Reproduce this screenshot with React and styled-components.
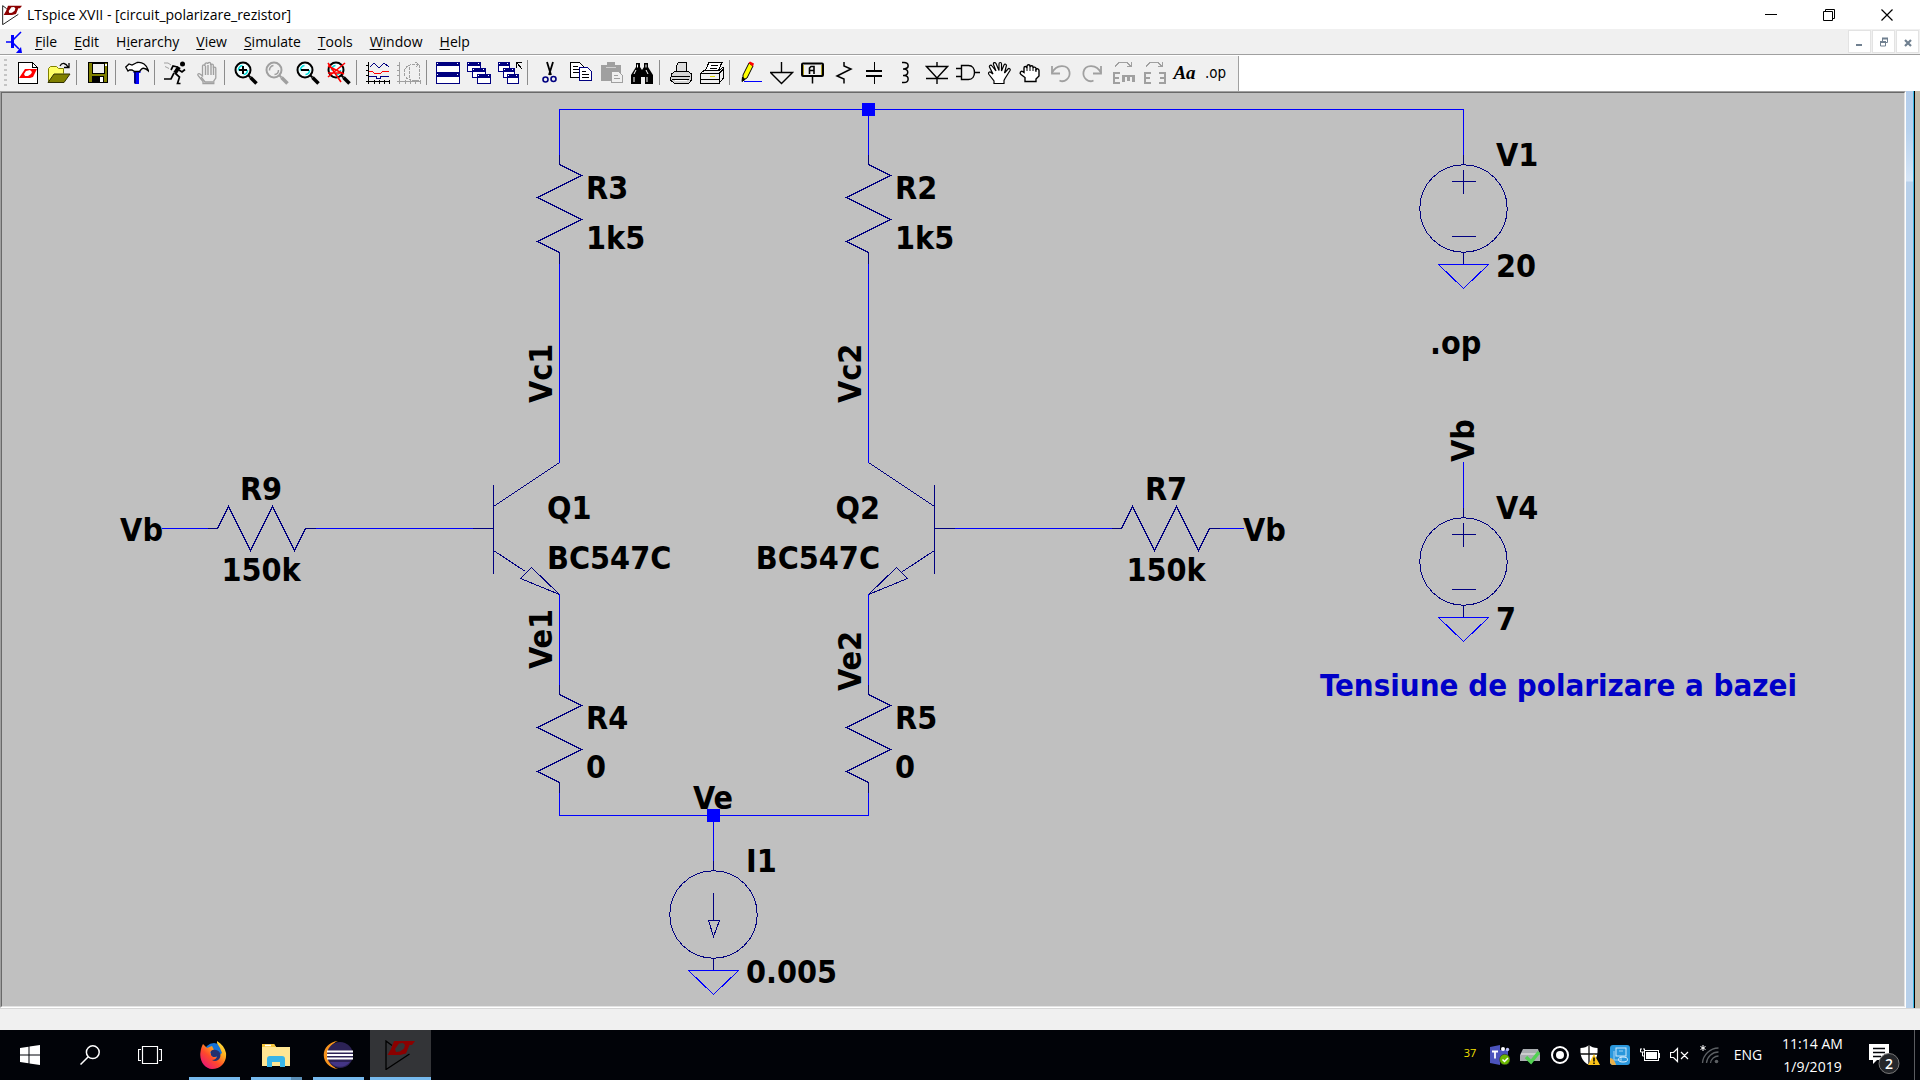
import React from "react";
import styled, { createGlobalStyle, css } from "styled-components";

const NAVY = "#000080";
const WIRE = "#0000ff";
const GRAY = "#a0a0a0";

const GlobalStyle = createGlobalStyle`
  *, *::before, *::after { box-sizing: border-box; }
  html, body { margin: 0; height: 100%; }
  #root { height: 100%; }
  body {
    overflow: hidden;
    font-family: "Open Sans", "Noto Sans", sans-serif;
    font-size: 14px;
    line-height: 20px;
    color: #000;
  }
  svg { display: block; flex: none; }
`;

const Screen = styled.div`
  display: flex;
  flex-direction: column;
  height: 100vh;
  background: #f0f0f0;
`;

const PlainButton = styled.button`
  display: flex;
  align-items: center;
  justify-content: center;
  flex: none;
  margin: 0;
  padding: 0;
  border: 0;
  background: transparent;
  color: inherit;
  font: inherit;
`;

/* ---------- title bar ---------- */

const TitleBar = styled.header`
  display: flex;
  align-items: center;
  height: 29px;
  padding: 0 4px 0 2px;
  background: #fff;
`;

const Title = styled.h1`
  flex: 1;
  margin: 0;
  padding-left: 5px;
  font-size: 14px;
  font-weight: 400;
  line-height: 28px;
`;

const WindowButton = styled(PlainButton)`
  width: 58px;
  height: 29px;
`;

/* ---------- menu bar ---------- */

const MenuBar = styled.nav`
  display: flex;
  align-items: center;
  height: 25px;
  padding-left: 5px;
`;

const Menus = styled.div`
  display: flex;
  flex: 1;
  padding-left: 4px;
`;

const MenuButton = styled(PlainButton)`
  padding: 0 9px 0 8px;
  height: 25px;
  u { text-underline-offset: 2px; }
`;

const MdiButton = styled(PlainButton)`
  width: 23px;
  height: 23px;
  margin-right: 1px;
  border: 1px solid #e3e3e3;
  background: #fff;
`;

/* ---------- toolbar ---------- */

const ToolRow = styled.div`
  display: flex;
  height: 37px;
  border-top: 1px solid ${GRAY};
  background: #fff;
  padding-top: 1px;
`;

const ToolBar = styled.div`
  display: flex;
  align-items: center;
  padding: 0 7px 2px 0;
  border-right: 1px solid ${GRAY};
  background: #f0f0f0;
`;

const Grip = styled.div`
  width: 3px;
  height: 28px;
  margin: 0 5px 0 4px;
  background: repeating-linear-gradient(#c4c4c4 0 2px, transparent 2px 5px);
`;

const ToolButton = styled(PlainButton)`
  width: 31px;
  height: 32px;
`;

const ToolSeparator = styled.div`
  width: 8px;
  height: 25px;
  padding-left: 2px;
  &::before {
    content: "";
    display: block;
    width: 1px;
    height: 100%;
    background: #8c8c8c;
  }
`;

const ToolText = styled.span`
  line-height: 24px;
  ${(p) =>
    p.$kind === "serif"
      ? css`
          font: italic bold 19px "Liberation Serif", serif;
        `
      : css`
          font: 15px "DejaVu Sans Condensed", "DejaVu Sans", sans-serif;
        `}
`;

/* ---------- work area ---------- */

const WorkArea = styled.main`
  display: flex;
  flex: 1;
  min-height: 0;
`;

const Sheet = styled.section`
  flex: 1;
  min-width: 0;
  border: 1px solid;
  border-color: ${GRAY} #fff #fff ${GRAY};
`;

const SheetInner = styled.div`
  height: 100%;
  overflow: hidden;
  border: 1px solid;
  border-color: #696969 #e3e3e3 #e3e3e3 #696969;
  background: #c0c0c0;
`;

const Drawing = styled.svg`
  width: 100%;
  height: 100%;
  fill: none;
  stroke: ${NAVY};
  shape-rendering: crispEdges;
`;

const DrawingText = styled.text`
  font: bold ${(p) => (p.$comment ? 31 : 32)}px "DejaVu Sans Condensed", "DejaVu Sans", sans-serif;
  fill: ${(p) => (p.$comment ? "#0000c8" : "#000")};
  stroke: none;
`;

const EdgeStrip = styled.div`
  display: flex;
  width: 14px;
  &::before {
    content: "";
    width: 8px;
    border-right: 1px solid #38b4e0;
    background: linear-gradient(#b4cdeb, #b8d2ee 40px, #d6e5f6 90px, #b8d0ea 91px);
  }
  &::after {
    content: "";
    flex: 1;
    border-left: 1px solid #000;
    background: #c2bbab;
  }
`;

const StatusBar = styled.footer`
  height: 22px;
  border-top: 1px solid #d7d7d7;
`;

/* ---------- taskbar ---------- */

const TaskBar = styled.footer`
  display: flex;
  align-items: stretch;
  height: 50px;
  background: #010308;
  color: #fff;
`;

const SystemButton = styled(PlainButton)`
  width: 60px;
`;

const Apps = styled.div`
  display: flex;
  flex: 1;
  padding-left: 4px;
`;

const AppButton = styled(PlainButton)`
  position: relative;
  width: ${(p) => (p.$active ? 61 : 62)}px;
  padding-right: 2px;
  background: ${(p) => (p.$active ? "#333437" : "transparent")};
  &::after {
    content: "";
    position: absolute;
    bottom: 0;
    left: ${(p) => (p.$active ? 0 : 5)}px;
    right: ${(p) => (p.$active ? 0 : 6)}px;
    height: 3px;
    background: ${(p) =>
      p.$stacked ? "linear-gradient(90deg, #76b9ed 40px, #5a8db5 40px)" : "#76b9ed"};
  }
`;

const TrayButton = styled(PlainButton)`
  width: 30px;
`;

const TrayCount = styled.span`
  font-size: 11px;
  color: #f5e100;
  padding-bottom: 4px;
`;

const Language = styled(PlainButton)`
  width: 46px;
`;

const Clock = styled(PlainButton)`
  flex-direction: column;
  width: 83px;
  line-height: 23px;
`;

const Notifications = styled(PlainButton)`
  width: 60px;
  padding-top: 8px;
`;

const ShowDesktop = styled(PlainButton)`
  width: 6px;
  border-left: 1px solid #5a5c60;
`;

/* ---------- icons ---------- */

const Icon = ({ size = 24, box = 24, children, ...rest }) => (
  <svg width={size} height={size} viewBox={`0 0 ${box} ${box}`} fill="none" aria-hidden="true" {...rest}>
    {children}
  </svg>
);

const Logo = ({ size }) => (
  <Icon size={size} box={30}>
    <path d="M7 5.500 1 1v28.500L24.500 14" stroke="#000" strokeWidth="1.300" />
    <path
      d="M9 1H30L27 5H24.500L21 13.500 15 15H2.500L6 9zM14 3.500 10 9l1 3 4-.5 4-3 1-3.500-2-2z"
      fill="#8b0000"
      fillRule="evenodd"
    />
  </Icon>
);

const Lens = ({ rim = "#000", glint = "#00e0e0", children }) => (
  <Icon>
    <circle cx="9" cy="9" r="7.500" fill={rim === "#000" ? "#f4ffff" : "none"} stroke={rim} strokeWidth="2" />
    <path d="M4.500 9.500a4.500 4.500 0 0 1 4-5M13.500 9a4.500 4.500 0 0 1-4 4.500" stroke={glint} strokeWidth="1.500" />
    <path d="m14.500 14.500 2 2" stroke={rim} strokeWidth="2" />
    <path d="m16.500 16.500 6 6" stroke={rim} strokeWidth="3.500" />
    {children}
  </Icon>
);

const MiniWindow = ({ x, y, w = 14, h = 10 }) => (
  <g>
    <rect x={x + 0.5} y={y + 0.5} width={w - 1} height={h - 1} fill="#fff" stroke={NAVY} />
    <rect x={x} y={y} width={w} height="4" fill={NAVY} />
    <rect x={x + w - 3} y={y + 1} width="1" height="1" fill="#fff" />
    <rect x={x + 1} y={y + 1} width="1" height="1" fill="#fff" />
  </g>
);

const RotatePair = ({ mirror }) => (
  <Icon stroke={GRAY} shapeRendering="crispEdges">
    <path d="M4 5.500 8 1.500h8l4 4M20.500 1v5M16 5.500h5" strokeWidth="1" />
    <path d="M9 12H3v10h6M2 17h6" strokeWidth="2.500" />
    {mirror ? (
      <path d="M17 12h6v10h-6M18 17h5" strokeWidth="2.500" />
    ) : (
      <path d="M11 15h13M12.500 14v7M17.500 15v5M22.500 14v7" strokeWidth="2.500" />
    )}
  </Icon>
);

const toolIcons = {
  new: (
    <Icon shapeRendering="crispEdges">
      <path d="M2.500 1.500h14l5 5v16h-19z" fill="#fff" stroke="#000" />
      <path d="M16.500 1.500v5h5" stroke="#000" />
      <path
        d="M9 8h12l-4 8-3 1H3l4-6zM10 10l-2 3 1 2h3l3-2 1-2-2-2z"
        fill="#ff0000"
        fillRule="evenodd"
        shapeRendering="auto"
      />
    </Icon>
  ),
  open: (
    <Icon>
      <path d="M1.500 20.500v-13l2-2h6l2 2h5v5" fill="#ffff66" stroke="#808000" />
      <path d="M1 21.500 7 13h16l-6 8.500z" fill="#808000" stroke="#303000" />
      <path d="M13 5c2-4 6-3 8 1M22 2v4.500h-5" stroke="#000" strokeWidth="1.300" />
    </Icon>
  ),
  save: (
    <Icon shapeRendering="crispEdges">
      <rect x="2.500" y="1.500" width="19" height="20" fill="#808000" stroke="#000" />
      <rect x="6" y="2" width="12" height="10" fill="#f0f0f0" stroke="#000" />
      <rect x="6" y="15" width="12" height="7" fill="#000" />
      <rect x="14" y="16" width="3" height="5" fill="#fff" />
      <rect x="19" y="3" width="2" height="2" fill="#fff" />
    </Icon>
  ),
  hammer: (
    <Icon>
      <path d="M10.500 9h5v3h-1.500v11h-4V12H8z" fill="#0000ff" />
      <path d="M10 11v11.500" stroke={NAVY} strokeWidth="2" />
      <path
        d="M.8 6 4 3l3 1 5-2.500c5-1 10 2 11.500 8.500-3-3-5-3.500-7-2l-2 2.500h-5L7 9H4.500L3 10z"
        fill="#fff"
        stroke="#000"
        strokeWidth="1.300"
      />
    </Icon>
  ),
  run: (
    <Icon stroke="#000">
      <circle cx="18.500" cy="3" r="2.500" fill="#000" stroke="none" />
      <path d="m15 6-4 6" strokeWidth="4" />
      <path d="m11 12 4.500 4-2 6.500h3M10 12l-3 6H0M13.500 6 9 5 7 9M15 9l3 2 3-2.500" strokeWidth="1.700" />
      <path d="M0 2h4l3 2M1 5.500l4 2" stroke={GRAY} />
    </Icon>
  ),
  stop: (
    <Icon stroke={GRAY}>
      <path
        d="M8 22.500v-2L3 14.500c-.8-1.500 1-2.500 2-1.500l2.500 2V5c0-1.500 2.500-1.500 2.500 0V3c0-1.500 2.800-1.500 2.800 0v-.5c0-1.500 2.800-1.500 2.800 0V4c.3-1.200 2.700-1.200 2.700 0v3c.3-1.200 2.500-1.200 2.500 0v10l-2 3v2.500z"
        strokeWidth="1.300"
      />
      <path d="M10.500 5v9M13 4v10M16 4v10M18.500 7v7M6 16l4 5h8" strokeWidth="1.400" />
    </Icon>
  ),
  zoomIn: <Lens><path d="M5 9h8M9 5v8" stroke="#000" strokeWidth="2" /></Lens>,
  pan: <Lens rim={GRAY} glint={GRAY} />,
  zoomOut: <Lens><path d="M5 9h8" stroke="#000" strokeWidth="2" /></Lens>,
  zoomFit: (
    <Lens><path d="M1 2l13 19M18 2 1 16M1 5l16 8M1 12h15" stroke="#ff0000" strokeWidth="1.600" /></Lens>
  ),
  plot: (
    <Icon shapeRendering="crispEdges">
      <path d="M2.500 1v22M0 20.500h24M0 4.500h3M0 9.500h3M0 14.500h3M8.500 19v4M13.500 19v4M18.500 19v4M23.500 19v4" stroke="#000" />
      <path d="m4 6 4-4 5 5 5-5 5 4" stroke={NAVY} />
      <path d="M3 10.500h3l3 2h5l3-2h6" stroke="#ff0000" />
      <path d="M3 15.500h7v2h4v-2h9" stroke={NAVY} />
    </Icon>
  ),
  autorange: (
    <Icon stroke={GRAY} shapeRendering="crispEdges">
      <path d="M2.500 1v22M0 20.500h24M0 4.500h3M0 9.500h3M0 14.500h3M8.500 19v4M13.500 19v4M18.500 19v4M23.500 19v4" />
      <path d="M22 3.500h-8L9.500 6 7 9.500v4L9.500 17l4.500 2h8M18.500 1l3 2.500-3 3M22.500 4v14M12.500 6v12" strokeDasharray="3 1" />
    </Icon>
  ),
  tile: (
    <Icon shapeRendering="crispEdges"><MiniWindow x={0} y={1} w={24} h={11} /><MiniWindow x={0} y={12} w={24} h={11} /></Icon>
  ),
  cascade: (
    <Icon shapeRendering="crispEdges"><MiniWindow x={0} y={1} /><MiniWindow x={5} y={7} /><MiniWindow x={10} y={13} /></Icon>
  ),
  closeAll: (
    <Icon shapeRendering="crispEdges">
      <MiniWindow x={0} y={1} w={12} /><MiniWindow x={5} y={7} w={12} /><MiniWindow x={9} y={13} w={12} />
      <path d="M18.500 7V1.500H24M19 2l5 6" stroke="#000" />
    </Icon>
  ),
  cut: (
    <Icon>
      <path d="m10 1 4 13M16 1l-4 13" stroke="#000" strokeWidth="1.800" />
      <circle cx="8.500" cy="18.500" r="2.500" stroke={NAVY} strokeWidth="1.600" />
      <circle cx="16.500" cy="18" r="2.500" stroke={NAVY} strokeWidth="1.600" />
    </Icon>
  ),
  copy: (
    <Icon shapeRendering="crispEdges">
      <path d="M2.500 1.500h9l4 4v11h-13z" fill="#fff" stroke="#000" />
      <path d="M5 5.500h5M5 8.500h7M5 11.500h7" stroke="#000" />
      <path d="M11.500 6.500h8l4 4v9h-12z" fill="#fff" stroke={NAVY} />
      <path d="M14 10.500h4M14 13.500h7M14 16.500h7" stroke="#000" />
    </Icon>
  ),
  paste: (
    <Icon shapeRendering="crispEdges">
      <path d="M2 4h6V1h8v3h6v16H2z" fill={GRAY} />
      <path d="M7 6.500h10" stroke="#d0d0d0" />
      <path d="M12.500 10.500h7l4 4v7h-11z" fill="#f0f0f0" stroke={GRAY} />
      <path d="M15 14.500h4M15 17.500h6" stroke={GRAY} />
    </Icon>
  ),
  find: (
    <Icon>
      <path d="M6 2h4v4l2 3 2-3V2h4v4l5 8v9h-8v-7h-4v7H1v-9l5-8z" fill="#000" />
      <path d="M7.500 3.500v3M16 3.500v3M6 9l-2 4M16 9l2 4M4 16v5M17 16v5" stroke="#fff" />
    </Icon>
  ),
  print: (
    <Icon shapeRendering="crispEdges">
      <path d="M7.500 10.500v-6l2-3h8v9" fill="#ddd" stroke="#000" />
      <path d="m2.500 13 4-3h12l4 3v6l-3 3.500h-14l-4-3.500z" fill="#d6d6d6" stroke="#000" />
      <path d="M2 15.500h19M3 18.500h17" stroke="#000" />
      <path d="M6 19h12" stroke="#fff" />
    </Icon>
  ),
  printSetup: (
    <Icon shapeRendering="crispEdges">
      <path d="m5 10 4-8.500h13L18 10z" fill="#fff" stroke="#000" />
      <path d="M11 4.500h7M10 7h7" stroke="#000" />
      <path d="M.5 12.500 4 9.500h15l4-3v11l-4 5H.5z" fill="#efefef" stroke="#000" />
      <path d="M1 12.500h18l4-4M19.500 13v9M1 18.500h18" stroke="#000" />
      <path d="M10 15.500h5" stroke="#e0d800" />
    </Icon>
  ),
  wire: (
    <Icon>
      <path d="m4 14 6-12 4 3-6 12-4 2z" fill="#ffff00" stroke="#000" />
      <path d="m9.500 2 1.500-1.500 4 2-1 3z" fill="#ff0000" />
      <path d="m3.500 16-.5 4.500 3-2z" fill="#000" stroke="#000" />
      <path d="M5 20.500h18" stroke="#0000ff" />
    </Icon>
  ),
  ground: <Icon stroke="#000"><path d="M11.500 1v10.500M.5 11.500h22l-11 11z" strokeWidth="1.400" /></Icon>,
  label: (
    <Icon>
      <rect x="1" y="2.500" width="21" height="12.500" rx="1" stroke="#000" strokeWidth="2" fill="#f0f0f0" />
      <path d="M2.500 4v10M20.500 4v10" stroke="#b0a020" />
      <path d="M8.500 13V7l1.500-1.500h3V13M8.500 9.500h5" stroke="#000" strokeWidth="1.600" />
      <path d="M11.500 16v6.500" stroke="#000" strokeWidth="1.500" />
    </Icon>
  ),
  resistor: <Icon stroke="#000"><path d="M12 1v4l7 3-14 7 7 3v4.500" strokeWidth="1.500" /></Icon>,
  capacitor: (
    <Icon stroke="#000" shapeRendering="crispEdges">
      <path d="M11.500 1v8M11.500 15v8" /><path d="M3 10h16M3 15h16" strokeWidth="2" />
    </Icon>
  ),
  inductor: <Icon stroke="#000"><path d="M8 1.500h2c5 0 6 6 0 6.500H9h1c5 .5 5 6 0 6.500H9h1c6 .5 5 7 0 7H8" strokeWidth="1.500" /></Icon>,
  diode: <Icon stroke="#000"><path d="M12 1v4.500M1.500 5.500h21L12 17zM1 17.500h22M12 17v6" strokeWidth="1.400" /></Icon>,
  gate: <Icon stroke="#000"><path d="M5.500 4.500h7c8 0 8 14 0 14h-7zM0 7.500h5M0 15.500h5M19 11.500h5" strokeWidth="1.400" /></Icon>,
  move: (
    <Icon>
      <path
        d="M7 22.500V20l-5-6.500c-1.500-2.500 1-3 2-2l2 1.500-3.500-7c-.5-1.500 1.500-2.500 2.500-1L9 10 6.500 3.500C6 1.500 8 1 9 2.500l3 7V3c0-2 2.500-2 2.500 0v7L17 4c.8-1.500 2.800-.8 2.300 1l-1.800 7 3.500-4c1-1.200 2.800 0 2 1.500l-5 8-1 2v3z"
        fill="#fff"
        stroke="#000"
        strokeWidth="1.200"
      />
    </Icon>
  ),
  drag: (
    <Icon>
      <path
        d="M7 20.500v-4l-4-3c-2-1.500 0-4 1.500-3L6 11.500V7c0-2 2.500-2 3 0V5c.5-1.800 3-1.500 3 0v1c.5-1.800 3-1.500 3 0v1c.5-1.500 3-1 3 .5v1c1-1.500 3-.5 3 1V15l-3 3v2.500z"
        fill="#fff"
        stroke="#000"
        strokeWidth="1.400"
      />
      <path d="M9 7v3M12 6v4M15 7v3M18 8v3" stroke="#000" />
    </Icon>
  ),
  undo: <Icon stroke={GRAY}><path d="M3 12C7 3 19 3 20.500 11c1 6-5 11-10 8.500" strokeWidth="1.800" /><path d="M3 5v7.500h8" strokeWidth="1.800" /></Icon>,
  redo: <Icon stroke={GRAY}><path d="M21 12C17 3 5 3 3.500 11c-1 6 5 11 10 8.500" strokeWidth="1.800" /><path d="M21 5v7.500h-8" strokeWidth="1.800" /></Icon>,
  rotate: <RotatePair />,
  mirror: <RotatePair mirror />,
  text: <ToolText $kind="serif">Aa</ToolText>,
  directive: <ToolText>.op</ToolText>,
};

const toolGroups = [
  [["new", "New schematic"], ["open", "Open"]],
  [["save", "Save"]],
  [["hammer", "Control panel"]],
  [["run", "Run"], ["stop", "Halt"]],
  [["zoomIn", "Zoom in"], ["pan", "Pan"], ["zoomOut", "Zoom out"], ["zoomFit", "Zoom full extents"]],
  [["plot", "Pick visible traces"], ["autorange", "Autorange"]],
  [["tile", "Tile windows"], ["cascade", "Cascade windows"], ["closeAll", "Close all windows"]],
  [["cut", "Cut"], ["copy", "Copy"], ["paste", "Paste"], ["find", "Find"]],
  [["print", "Print"], ["printSetup", "Print setup"]],
  [
    ["wire", "Wire"], ["ground", "Ground"], ["label", "Label net"], ["resistor", "Resistor"],
    ["capacitor", "Capacitor"], ["inductor", "Inductor"], ["diode", "Diode"], ["gate", "Component"],
    ["move", "Move"], ["drag", "Drag"], ["undo", "Undo"], ["redo", "Redo"], ["rotate", "Rotate"],
    ["mirror", "Mirror"], ["text", "Text"], ["directive", "SPICE directive"],
  ],
];

/* menu names, with the position of the access key */
const menus = [
  ["File", 0], ["Edit", 0], ["Hierarchy", 1], ["View", 0],
  ["Simulate", 0], ["Tools", 0], ["Window", 0], ["Help", 0],
];

/* ---------- schematic symbols ---------- */

const Wire = ({ d }) => <path d={d} stroke={WIRE} />;

const Junction = ({ x, y }) => (
  <rect x={x - 6.5} y={y - 6.5} width="13" height="13" fill={WIRE} stroke="none" />
);

const Resistor = ({ x, y, horizontal }) => (
  <path
    transform={`translate(${x} ${y})${horizontal ? " rotate(-90)" : ""}`}
    d="M0-10V0l22 11-44 22 44 22-44 22 22 11v11"
  />
);

const Transistor = ({ x, y, flip }) => (
  <path
    transform={`translate(${x} ${y}) scale(${flip ? -1 : 1} 1)`}
    d="M-21 0H0M0-44V45M0-22 66-66M0 22 32 43M27 50 38 39 66 66z"
  />
);

const Ground = ({ x, y }) => <path d={`M${x - 25} ${y}h50l-25 24z`} stroke={WIRE} />;

const Source = ({ x, y, current }) => (
  <g transform={`translate(${x} ${y})`}>
    <circle cy="44" r="43.700" />
    <path d="M0-10V0M0 88v12" />
    {current ? <path d="M0 22v28M-5 50H6L0 66z" /> : <path d="M0 5v24M-12 17h24M-12 72h24" />}
  </g>
);

const Label = ({ x, y, anchor = "start", vertical, comment, children }) => (
  <DrawingText
    x={vertical ? undefined : x}
    y={vertical ? undefined : y}
    transform={vertical ? `translate(${x} ${y}) rotate(-90)` : undefined}
    textAnchor={anchor}
    $comment={comment}
  >
    {children}
  </DrawingText>
);

const Schematic = () => (
  <Drawing role="img" aria-label="Circuit schematic">
    <g transform="translate(-2 -93)">
      <Resistor x={559.5} y={164.5} />
      <Resistor x={868.5} y={164.5} />
      <Resistor x={559.5} y={694.5} />
      <Resistor x={868.5} y={694.5} />
      <Resistor x={217.5} y={528.5} horizontal />
      <Resistor x={1121.5} y={528.5} horizontal />
      <Transistor x={493.5} y={528.5} />
      <Transistor x={934.5} y={528.5} flip />
      <Source x={1463.5} y={164.5} />
      <Source x={1463.5} y={517.5} />
      <Source x={713.5} y={870.5} current />
      <Ground x={1463.5} y={264.5} />
      <Ground x={1463.5} y={617.5} />
      <Ground x={713.5} y={970.5} />
      <Wire d="M559.500 155V109.500H1463.500V155M868.500 109.500V155M559.500 264V463M868.500 264V463" />
      <Wire d="M162 528.500H208M316 528.500H473M955 528.500H1112M1220 528.500H1244" />
      <Wire d="M559.500 594V685M868.500 594V685M559.500 793V815.500H868.500V793M713.500 815V861M1463.500 462V508" />
      <Junction x={868.5} y={109.5} />
      <Junction x={713.5} y={815.5} />

      <Label x={586} y={199}>R3</Label>
      <Label x={586} y={249}>1k5</Label>
      <Label x={895} y={199}>R2</Label>
      <Label x={895} y={249}>1k5</Label>
      <Label x={552} y={403} vertical>Vc1</Label>
      <Label x={861} y={403} vertical>Vc2</Label>
      <Label x={163} y={541} anchor="end">Vb</Label>
      <Label x={261} y={500} anchor="middle">R9</Label>
      <Label x={261} y={581} anchor="middle">150k</Label>
      <Label x={547} y={519}>Q1</Label>
      <Label x={547} y={569}>BC547C</Label>
      <Label x={880} y={519} anchor="end">Q2</Label>
      <Label x={880} y={569} anchor="end">BC547C</Label>
      <Label x={1166} y={500} anchor="middle">R7</Label>
      <Label x={1166} y={581} anchor="middle">150k</Label>
      <Label x={1243} y={541}>Vb</Label>
      <Label x={552} y={669} vertical>Ve1</Label>
      <Label x={861} y={691} vertical>Ve2</Label>
      <Label x={586} y={729}>R4</Label>
      <Label x={586} y={778}>0</Label>
      <Label x={895} y={729}>R5</Label>
      <Label x={895} y={778}>0</Label>
      <Label x={713} y={809} anchor="middle">Ve</Label>
      <Label x={746} y={872}>I1</Label>
      <Label x={746} y={983}>0.005</Label>
      <Label x={1496} y={166}>V1</Label>
      <Label x={1496} y={277}>20</Label>
      <Label x={1430} y={354}>.op</Label>
      <Label x={1474} y={462} vertical>Vb</Label>
      <Label x={1496} y={519}>V4</Label>
      <Label x={1496} y={630}>7</Label>
      <Label x={1320} y={696} comment>Tensiune de polarizare a bazei</Label>
    </g>
  </Drawing>
);

/* ---------- taskbar icons ---------- */

const FirefoxIcon = () => (
  <Icon size={28} box={28}>
    <defs>
      <linearGradient id="fox" x1="1" y1="0" x2="0.200" y2="1">
        <stop offset="0" stopColor="#fff44f" />
        <stop offset="0.350" stopColor="#ffb01e" />
        <stop offset="0.650" stopColor="#ff4a2a" />
        <stop offset="1" stopColor="#e8127c" />
      </linearGradient>
    </defs>
    <circle cx="14" cy="12" r="10" fill="#1573d6" />
    <path d="M3 3 7 7l5-2 2 4-4 2 2 4 5 1 5-4-2-5-3-5V0c5 3 8 7 9 12 1 9-5 16-14 16C5 28-1 20 .5 11 1 7 2 5 3 3z" fill="url(#fox)" />
    <path d="M11 10c2-2 7-2 9 2 2 5-3 10-8 7 3 0 5-2 5-4-2 2-5 1-6-1z" fill="#23306f" />
  </Icon>
);

const FolderIcon = () => (
  <Icon size={28} box={28}>
    <path d="M0 3h12l2 3h14v19H0z" fill="#ffe693" />
    <path d="M0 3h12l2 3H0z" fill="#f5c63c" />
    <path d="M3 4.500h6" stroke="#fff" strokeWidth="1.500" />
    <path d="M5 26V18a3 3 0 0 1 3-3h12a3 3 0 0 1 3 3v8h-5v-5h-8v5z" fill="#38b5e8" />
  </Icon>
);

const EclipseIcon = () => (
  <Icon size={30} box={30}>
    <path d="M15 1C-4 3-4 27 15 29 2 24 2 6 15 1z" fill="#f7941e" />
    <circle cx="17" cy="15" r="13" fill="#2c2255" />
    <path d="M7 22a13 13 0 0 0 20 0z" fill="#443586" />
    <path d="M4 11.500h26M4 15h26M4 18.500h26" stroke="#fff" strokeWidth="1.800" />
  </Icon>
);

const trayIcons = {
  "Teams": (
    <Icon size={20} box={20}>
      <path d="m0 2 10-2v20L0 18z" fill="#4b53bc" />
      <path d="M10 5h8v9h-8z" fill="#4b53bc" />
      <circle cx="13" cy="4" r="2" fill="#fff" /><circle cx="17.500" cy="4.500" r="1.700" fill="#b9bdf5" />
      <path d="M2 6.500h6M5 6.500v7" stroke="#fff" strokeWidth="1.800" />
      <circle cx="14.800" cy="14.500" r="5.200" fill="#6bb700" stroke="#222" strokeWidth=".5" />
      <path d="m12.500 14.500 2 2 3.500-3.500" stroke="#fff" strokeWidth="1.500" />
    </Icon>
  ),
  "Safely remove hardware": (
    <Icon size={20} box={20}>
      <path d="M3 4h15l2 6v6H0v-6z" fill="#a9adb0" /><path d="M1 9h18" stroke="#d8d8d8" strokeWidth="1.500" />
      <path d="m6 12 5 5 8-10" stroke="#53d153" strokeWidth="3.500" />
    </Icon>
  ),
  "Recorder": (
    <Icon size={20} box={20}><circle cx="10" cy="10" r="8" stroke="#fff" strokeWidth="2" /><circle cx="10" cy="10" r="4" fill="#fff" /></Icon>
  ),
  "Security": (
    <Icon size={20} box={20}>
      <path d="M9 0c2 2 5 3 8.500 3 .5 7-1 13-8.500 17C1.500 16 0 10 .5 3 4 3 7 2 9 0z" fill="#fff" />
      <path d="M9 0v20M0 9h18" stroke="#111" strokeWidth="1.300" />
      <path d="M14 9 20 20H8z" fill="#fcc419" /><path d="M14 12.500v4M14 17.500v1.500" stroke="#000" strokeWidth="1.500" />
    </Icon>
  ),
  "Graphics": (
    <Icon size={20} box={20}>
      <rect width="20" height="20" rx="3" fill="#2a97dc" />
      <path d="M0 13c3 0 5 3 6 7H2l-2-2z" fill="#e8b04a" />
      <rect x="6" y="3" width="10" height="8" stroke="#cfe9fb" /><path d="M4 6v9h8M11 11v4M9 6h4" stroke="#9fd2f5" />
      <ellipse cx="13" cy="14.500" rx="4.500" ry="2.500" stroke="#e6f4ff" />
    </Icon>
  ),
  "Battery": (
    <Icon size={20} box={20}>
      <rect x="4.500" y="5.500" width="14" height="10" stroke="#fff" /><rect x="6" y="7" width="11" height="7" fill="#fff" />
      <path d="M19.500 8v5M.5 4v3h4V4M2.500 7v4h2M1 3v2M4 3v2" stroke="#fff" />
    </Icon>
  ),
  "Volume muted": (
    <Icon size={20} box={20}><path d="M.500 7.500h3l4-4v13l-4-4h-3zM11 7l7 7M18 7l-7 7" stroke="#fff" strokeWidth="1.200" /></Icon>
  ),
  "Wireless": (
    <Icon size={20} box={20}>
      <path d="M2.500 18C3 10 10 3 18.500 3M6.500 18C7 12 12 7 18.500 7M10.500 18c.5-4 4-7 8-7" stroke="#5c6064" strokeWidth="1.300" />
      <circle cx="16.500" cy="16.500" r="1.800" fill="#5c6064" />
      <path d="M3 0v6M.5 1.500l5 3M5.500 1.500l-5 3" stroke="#fff" />
    </Icon>
  ),
};

export default function App() {
  return (
    <>
      <GlobalStyle />
      <Screen>
        <TitleBar>
          <Logo size={20} />
          <Title>LTspice XVII - [circuit_polarizare_rezistor]</Title>
          <WindowButton aria-label="Minimize">
            <Icon size={12} box={12} stroke="#000"><path d="M0 5.500h12" /></Icon>
          </WindowButton>
          <WindowButton aria-label="Restore">
            <Icon size={12} box={12} stroke="#000"><path d="M.5 2.500h9v9h-9zM2.500 2V.5h9v9H10" /></Icon>
          </WindowButton>
          <WindowButton aria-label="Close">
            <Icon size={12} box={12} stroke="#000"><path d="m.5.5 11 11M11.500.5l-11 11" strokeWidth="1.200" /></Icon>
          </WindowButton>
        </TitleBar>

        <MenuBar aria-label="Main menu">
          <svg width="18" height="22" viewBox="0 0 18 22" fill="none" stroke="#0000ff" aria-hidden="true">
            <path d="M1 11h6" strokeWidth="1.500" />
            <path d="M7.500 4v13" strokeWidth="3" />
            <path d="m8 9 8-8M8 12l6 6" strokeWidth="1.600" />
            <path d="M17 22h-6l5-6z" fill="#0000ff" stroke="none" />
          </svg>
          <Menus>
            {menus.map(([name, key]) => (
              <MenuButton key={name}>
                <span>{name.slice(0, key)}<u>{name[key]}</u>{name.slice(key + 1)}</span>
              </MenuButton>
            ))}
          </Menus>
          <MdiButton aria-label="Minimize document">
            <Icon size={10} box={10}><path d="M1 8h6" stroke="#708090" strokeWidth="2" /></Icon>
          </MdiButton>
          <MdiButton aria-label="Restore document">
            <Icon size={10} box={10} stroke="#708090"><path d="M3.500 4V1.500h5v4H7" /><path d="M1.500 5h5v4h-5z" /><path d="M3 1.500h6M1 5h6" strokeWidth="2" /></Icon>
          </MdiButton>
          <MdiButton aria-label="Close document">
            <Icon size={10} box={10}><path d="m2 3 6 6M8 3 2 9" stroke="#708090" strokeWidth="2.200" /></Icon>
          </MdiButton>
        </MenuBar>

        <ToolRow>
          <ToolBar role="toolbar" aria-label="Tools">
            <Grip />
            {toolGroups.map((group, i) => (
              <React.Fragment key={i}>
                {i > 0 && <ToolSeparator />}
                {group.map(([icon, name]) => (
                  <ToolButton key={icon} aria-label={name}>{toolIcons[icon]}</ToolButton>
                ))}
              </React.Fragment>
            ))}
          </ToolBar>
        </ToolRow>

        <WorkArea>
          <Sheet>
            <SheetInner><Schematic /></SheetInner>
          </Sheet>
          <EdgeStrip />
        </WorkArea>
        <StatusBar />

        <TaskBar>
          <SystemButton aria-label="Start">
            <Icon size={20} box={20}>
              <path d="m0 3 8.500-1.200v7.700H0zM9.500 1.600 20 0v9.500H9.500zM0 10.500h8.500v7.700L0 17zM9.500 10.500H20V20L9.500 18.400z" fill="#fff" />
            </Icon>
          </SystemButton>
          <SystemButton aria-label="Search">
            <Icon size={20} box={20} stroke="#fff" strokeWidth="1.500"><circle cx="12.800" cy="7.200" r="6.400" /><path d="M8.300 11.700.5 19.500" /></Icon>
          </SystemButton>
          <SystemButton aria-label="Task view">
            <Icon stroke="#fff"><path d="M4.500 3.500h15v17h-15zM3 6.500H.5v11H3M21 6.500h2.500v11H21" strokeWidth="1.200" /></Icon>
          </SystemButton>
          <Apps>
            <AppButton aria-label="Firefox"><FirefoxIcon /></AppButton>
            <AppButton aria-label="File Explorer" $stacked><FolderIcon /></AppButton>
            <AppButton aria-label="Eclipse"><EclipseIcon /></AppButton>
            <AppButton aria-label="LTspice" $active><Logo size={30} /></AppButton>
          </Apps>
          <TrayButton aria-label="37 degrees"><TrayCount>37</TrayCount></TrayButton>
          {Object.entries(trayIcons).map(([name, icon]) => (
            <TrayButton key={name} aria-label={name}>{icon}</TrayButton>
          ))}
          <Language>ENG</Language>
          <Clock><span>11:14 AM</span><span>1/9/2019</span></Clock>
          <Notifications aria-label="2 notifications">
            <svg width="32" height="32" viewBox="0 0 32 32" aria-hidden="true">
              <path d="M1 1h20v16H9l-4 4v-4H1z" fill="#fff" />
              <path d="M5 5.500h12M5 9.500h12M5 13.500h8" stroke="#010308" strokeWidth="1.300" />
              <circle cx="21" cy="20.500" r="10" fill="#25272b" stroke="#777" />
              <text x="21" y="26" textAnchor="middle" fill="#fff" fontSize="14" fontWeight="600">2</text>
            </svg>
          </Notifications>
          <ShowDesktop aria-label="Show desktop" />
        </TaskBar>
      </Screen>
    </>
  );
}
